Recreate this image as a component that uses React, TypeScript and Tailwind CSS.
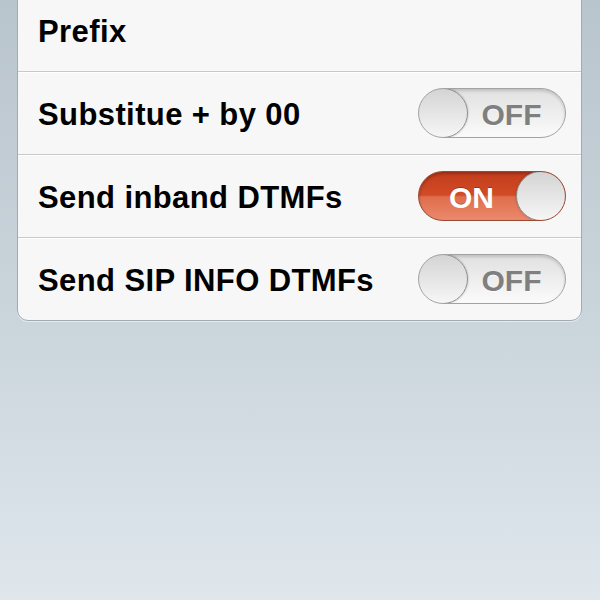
import React from "react";

const font = "[font-family:'Liberation_Sans',Arial,sans-serif]";

function Knob() {
  return (
    <div className="-my-px h-[50px] w-[50px] shrink-0 rounded-full border border-[#8f8f8f] bg-[linear-gradient(to_bottom,#d4d4d4,#f6f6f6)] shadow-[0_0_2px_rgba(0,0,0,0.3)]" />
  );
}

function Toggle({ on }: { on: boolean }) {
  if (on) {
    return (
      <div className="flex h-[50px] w-[148px] items-center overflow-hidden rounded-full border border-[#9a4a33] bg-[linear-gradient(to_bottom,#c43d1c_0%,#d24b27_48%,#e06d4c_52%,#ea8a6c_100%)] shadow-[inset_0_2px_3px_rgba(0,0,0,0.25)]">
        <span
          className={`flex-1 pl-[8px] pt-[3px] text-center text-[30px] font-bold text-white ${font} [text-shadow:0_-1px_0_rgba(0,0,0,0.25)]`}
        >
          ON
        </span>
        <div className="-mr-px flex">
          <Knob />
        </div>
      </div>
    );
  }
  return (
    <div className="flex h-[50px] w-[148px] items-center overflow-hidden rounded-full border border-[#a3a3a3] bg-[linear-gradient(to_bottom,#e0e0e0,#fbfbfb)] shadow-[inset_0_2px_3px_rgba(0,0,0,0.15)]">
      <div className="-ml-px flex">
        <Knob />
      </div>
      <span
        className={`flex-1 pr-[10px] pt-[3px] text-center text-[30px] font-bold text-[#7f7f7f] ${font} [text-shadow:0_1px_0_rgba(255,255,255,0.8)]`}
      >
        OFF
      </span>
    </div>
  );
}

function Row({
  label,
  toggle,
  last,
}: {
  label: string;
  toggle?: boolean;
  last?: boolean;
}) {
  return (
    <div
      className={
        last
          ? "flex h-[82px] items-center justify-between pl-[20px] pr-[15px]"
          : "flex h-[83px] items-center justify-between border-b border-[#c8c9ca] pl-[20px] pr-[15px] shadow-[0_1px_0_#ffffff]"
      }
    >
      <span
        className={`pt-[5px] text-[31px] font-bold tracking-[0.4px] text-black ${font}`}
      >
        {label}
      </span>
      {toggle !== undefined && <Toggle on={toggle} />}
    </div>
  );
}

export default function App() {
  return (
    <div className="h-[600px] w-[600px] overflow-hidden bg-[linear-gradient(to_bottom,#b9c5cd_0%,#cbd5dc_55%,#dfe7ed_100%)]">
      <div className="ml-[17px] mr-[18px] mt-[-12px] overflow-hidden rounded-b-[11px] border border-[#a3abb1] bg-[#f7f7f7] shadow-[0_1px_0_rgba(255,255,255,0.5)]">
        <Row label="Prefix" />
        <Row label="Substitue + by 00" toggle={false} />
        <Row label="Send inband DTMFs" toggle={true} />
        <Row label="Send SIP INFO DTMFs" toggle={false} last />
      </div>
    </div>
  );
}
